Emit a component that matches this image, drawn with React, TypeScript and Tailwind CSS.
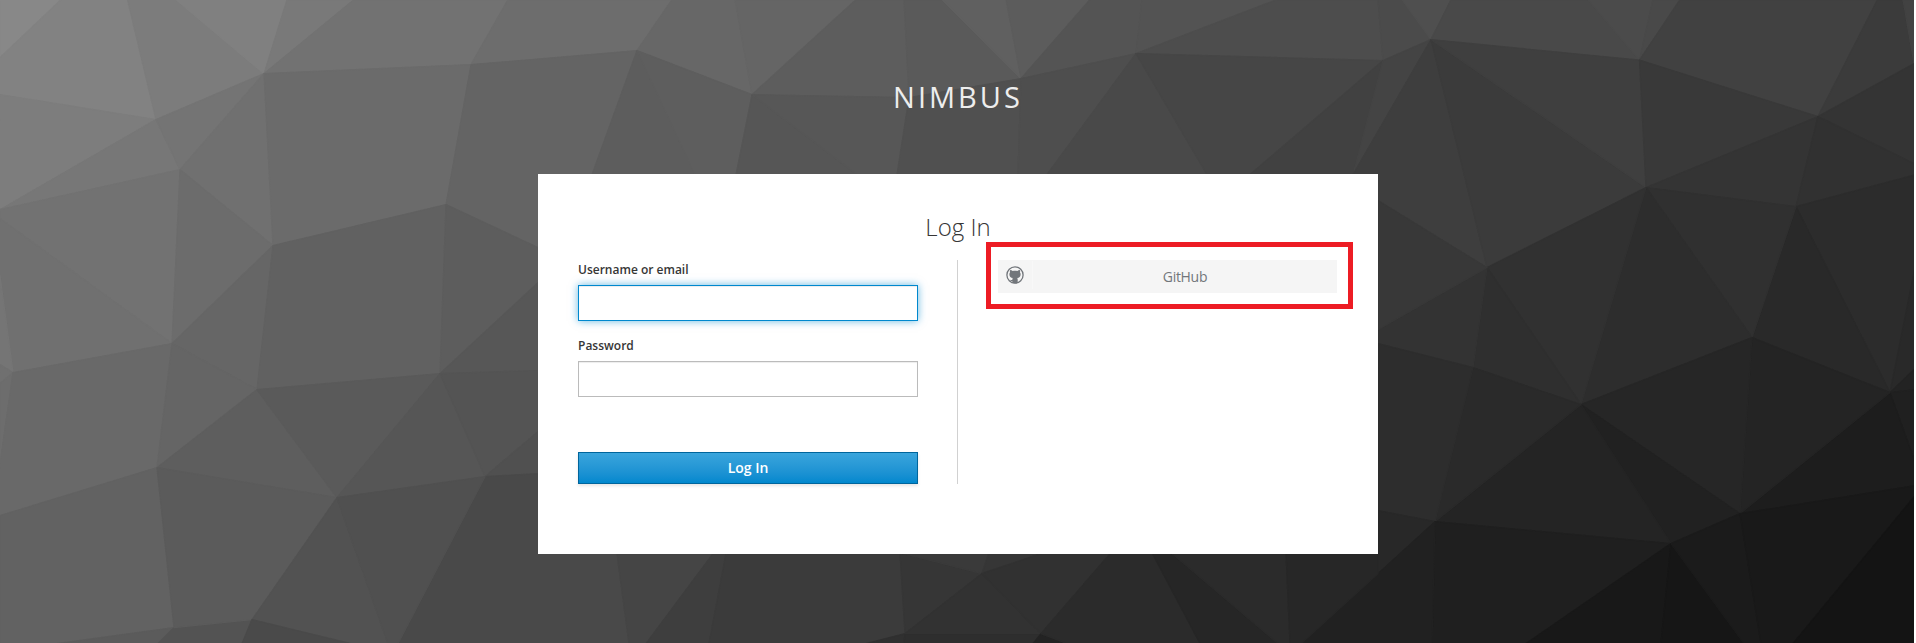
type Facet = [fill: string, points: string];

const facets: Facet[] = [
  ['#888888', '0,-1 61,-1 0,57'],
  ['#828282', '61,-1 127.5,-1 156,119 0,94 0,57'],
  ['#7c7c7c', '127.5,-1 176,-1 264,73 156,119'],
  ['#808080', '176,-1 287,-1 264,73'],
  ['#797979', '287,-1 354,-1 264,73'],
  ['#727272', '354,-1 508,-1 471,64 264,73'],
  ['#6d6d6d', '508,-1 672,-1 637,50 471,64'],
  ['#7d7d7d', '0,94 156,119 0,209'],
  ['#777777', '156,119 180,169 0,209'],
  ['#747474', '156,119 264,73 180,169'],
  ['#707070', '264,73 273,245 180,169'],
  ['#6b6b6b', '264,73 471,64 446,204 273,245'],
  ['#646464', '471,64 637,50 592,174 538,247 446,204'],
  ['#727272', '0,209 180,169 172,343 0,218'],
  ['#707070', '0,218 172,343 13,372 0,275'],
  ['#757575', '0,275 13,372 0,364'],
  ['#707070', '0,364 13,372 0,383'],
  ['#6d6d6d', '0,383 13,372 0,463'],
  ['#6c6c6c', '180,169 273,245 172,343'],
  ['#666666', '273,245 257,389 172,343'],
  ['#616161', '273,245 446,204 440,373 257,389'],
  ['#5d5d5d', '446,204 538,247 538,282 440,373'],
  ['#575757', '440,373 538,282 538,370'],
  ['#696969', '13,372 172,343 157,467 0,515 0,463'],
  ['#656565', '172,343 257,389 157,467'],
  ['#5e5e5e', '257,389 337,497 157,467'],
  ['#5a5a5a', '257,389 440,373 337,497'],
  ['#565656', '440,373 485,476 337,497'],
  ['#545454', '440,373 538,370 538,431 485,476'],
  ['#505050', '485,476 538,431 538,473'],
  ['#494949', '485,476 538,473 617,553 629,643 398,643'],
  ['#626262', '157,467 174,627 57,643 0,643 0,515'],
  ['#5b5b5b', '174,627 57,643 158,643'],
  ['#535353', '174,627 252,619 242,643 158,643'],
  ['#5b5b5b', '157,467 337,497 252,619 174,627'],
  ['#525252', '337,497 388,643 351,643 252,619'],
  ['#505050', '337,497 485,476 398,643 388,643'],
  ['#4a4a4a', '252,619 351,643 242,643'],
  ['#676767', '672,-1 735,-1 752,94 637,50'],
  ['#656565', '735,-1 856,-1 752,94'],
  ['#5d5d5d', '856,-1 904,-1 909,97 752,94'],
  ['#5a5a5a', '904,-1 942,-1 1021,78 909,97'],
  ['#606060', '942,-1 1006,-1 1021,78'],
  ['#5c5c5c', '1006,-1 1090,-1 1021,78'],
  ['#545454', '1090,-1 1142,-1 1136,53 1021,78'],
  ['#535353', '1142,-1 1277,-1 1136,53'],
  ['#4d4d4d', '1277,-1 1378,-1 1383,60 1136,53'],
  ['#4b4b4b', '1378,-1 1402,-1 1431,39 1383,60'],
  ['#4f4f4f', '1402,-1 1451,-1 1431,39'],
  ['#494949', '1451,-1 1588,-1 1639.5,59.5 1431,39'],
  ['#4b4b4b', '1588,-1 1653,-1 1639.5,59.5'],
  ['#494949', '1653,-1 1680,-1 1639.5,59.5'],
  ['#414141', '1680,-1 1877.5,-1 1818,116 1639.5,59.5'],
  ['#3b3b3b', '1877.5,-1 1903,-1 1914,63 1818,116'],
  ['#424242', '1903,-1 1916,-1 1916,62 1914,63'],
  ['#5d5d5d', '637,50 592,174 695,174'],
  ['#5e5e5e', '637,50 752,94 736,174 695,174'],
  ['#565656', '752,94 736,174 857,174'],
  ['#575757', '752,94 909,97 897,174 857,174'],
  ['#505050', '909,97 1021,78 1018,174 897,174'],
  ['#4e4e4e', '1021,78 1136,53 1047,174 1018,174'],
  ['#494949', '1136,53 1047,174 1207,174'],
  ['#464646', '1136,53 1383,60 1250,174 1207,174'],
  ['#414141', '1383,60 1250,174 1353,174'],
  ['#444444', '1383,60 1431,39 1353,174'],
  ['#3e3e3e', '1431,39 1487,267 1378,200 1353,174'],
  ['#3b3b3b', '1431,39 1646,187 1487,267'],
  ['#3f3f3f', '1431,39 1639.5,59.5 1646,187'],
  ['#393939', '1639.5,59.5 1818,116 1646,187'],
  ['#343434', '1818,116 1796,206 1646,187'],
  ['#343434', '1818,116 1916,62 1916,164'],
  ['#313131', '1818,116 1916,164 1916,174 1796,206'],
  ['#2c2c2c', '1796,206 1916,174 1916,262 1890,392'],
  ['#292929', '1796,206 1890,392 1752,337'],
  ['#303030', '1646,187 1796,206 1752,337'],
  ['#2d2d2d', '1646,187 1752,337 1581,404'],
  ['#313131', '1646,187 1581,404 1487,267'],
  ['#2f2f2f', '1487,267 1581,404 1473,367'],
  ['#333333', '1487,267 1473,367 1378,343 1378,329'],
  ['#383838', '1487,267 1378,200 1378,329'],
  ['#292929', '1890,392 1916,262 1916,367'],
  ['#232323', '1890,392 1916,367 1916,389'],
  ['#202020', '1890,392 1916,389 1916,464'],
  ['#1d1d1d', '1890,392 1916,464 1916,485 1740,513'],
  ['#242424', '1752,337 1890,392 1740,513'],
  ['#262626', '1752,337 1740,513 1581,404'],
  ['#212121', '1581,404 1740,513 1671,543'],
  ['#242424', '1581,404 1671,543 1435,521'],
  ['#2a2a2a', '1473,367 1581,404 1435,521'],
  ['#2d2d2d', '1473,367 1435,521 1378,510 1378,343'],
  ['#282828', '1435,521 1378,510 1378,573'],
  ['#1f1f1f', '1435,521 1671,543 1526,643 1432,643'],
  ['#212121', '1435,521 1432,643 1301,643 1378,573'],
  ['#181818', '1671,543 1526,643 1661,643'],
  ['#161616', '1671,543 1661,643 1744,643'],
  ['#1b1b1b', '1671,543 1740,513 1761,643 1744,643'],
  ['#191919', '1740,513 1916,485 1916,494 1793,643 1761,643'],
  ['#141414', '1916,494 1916,643 1793,643'],
  ['#454545', '617,553 713,553 646,643 629,643'],
  ['#3e3e3e', '713,553 726,553 709,643 646,643'],
  ['#3b3b3b', '726,553 900,553 905,633 866,643 709,643'],
  ['#303030', '905,633 866,643 904,643'],
  ['#2e2e2e', '905,633 1041,633 1033,643 904,643'],
  ['#363636', '905,633 982,573 900,552'],
  ['#3a3a3a', '982,573 900,552 989,552'],
  ['#363636', '982,573 989,552 1044,552'],
  ['#323232', '982,573 1041,633 905,633'],
  ['#313131', '982,573 1044,552 1111,552 1041,633'],
  ['#232323', '1041,633 1033,643 1067,643'],
  ['#2b2b2b', '1041,633 1111,552 1152,552 1200,643 1067,643'],
  ['#262626', '1152,552 1171,552 1278,643 1200,643'],
  ['#2b2b2b', '1171,552 1286,552 1290,643 1278,643'],
  ['#272727', '1286,552 1378,552 1378,573 1301,643 1290,643'],
];

function Backdrop() {
  return (
    <svg
      className="absolute inset-y-0 left-0 h-full w-[calc(100%-2px)]"
      viewBox="0 0 1914 643"
      preserveAspectRatio="none"
      aria-hidden="true"
    >
      <defs>
        <linearGradient id="base" x1="0" y1="0" x2="1" y2="0.35">
          <stop offset="0" stopColor="#7c7c7c" />
          <stop offset="0.5" stopColor="#4a4a4a" />
          <stop offset="1" stopColor="#1c1c1c" />
        </linearGradient>
      </defs>
      <rect width="1914" height="643" fill="url(#base)" />
      <g transform="translate(0 0.6)">
        {facets.map(([fill, points]) => (
          <polygon
            key={points}
            points={points}
            fill={fill}
            stroke={fill}
            strokeWidth="1.2"
            strokeLinejoin="round"
          />
        ))}
      </g>
    </svg>
  );
}

function GithubIcon() {
  return (
    <svg className="h-[18px] w-[18px]" viewBox="0 0 18 18" fill="none" aria-hidden="true">
      <circle cx="9" cy="9" r="8.1" stroke="#72767b" strokeWidth="1.3" />
      <path
        fill="#72767b"
        d="M4.2 4c.9 0 1.8.4 2.5 1 1.5-.3 3.100-.3 4.600 0 .7-.6 1.600-1 2.500-1 .4.9.4 1.700.2 2.500.5.6.7 1.300.6 2.100-.1 2.200-1.300 3.200-3.400 3.500.4.5.5 1 .5 1.700v2.900c-1.700.7-3.700.7-5.400 0v-1.700c-1.300.2-1.900-.3-2.300-1.300.9.3 1.400.4 2.300.2 0-.7.1-1.300.5-1.800-2.100-.3-3.300-1.300-3.400-3.500-.1-.8.1-1.500.6-2.100C3.800 5.700 3.800 4.900 4.200 4z"
      />
    </svg>
  );
}

interface FieldProps {
  id: string;
  label: string;
  type: string;
  active?: boolean;
}

function Field({ id, label, type, active = false }: FieldProps) {
  const look = active
    ? 'border-[#0088ce] shadow-[inset_0_1px_1px_rgba(3,3,3,0.075),0_0_8px_rgba(0,136,206,0.6)]'
    : 'border-[#bbbbbb] shadow-[inset_0_1px_1px_rgba(3,3,3,0.075)]';
  return (
    <div className="flex flex-col">
      <label htmlFor={id} className="h-5 text-xs leading-5 font-semibold text-[#363636]">
        {label}
      </label>
      <input
        id={id}
        type={type}
        className={`mt-[5px] h-9 w-full border bg-white px-2 text-sm outline-none ${look}`}
      />
    </div>
  );
}

export default function App() {
  return (
    <div className="relative h-[643px] w-full overflow-hidden bg-white font-['Open_Sans',sans-serif]">
      <Backdrop />
      <div className="relative flex flex-col items-center">
        <header className="flex h-[174px] items-start pt-[77px] text-[29px] leading-10 tracking-[3px] text-[#ededed]">
          NIMBUS
        </header>
        <main className="flex h-[380px] w-[840px] flex-col bg-white px-10">
          <h1 className="mt-9 h-[34px] text-center text-2xl leading-[34px] font-light text-[#363636]">
            Log In
          </h1>
          <div className="mt-4 flex h-[224px]">
            <form className="flex w-[340px] flex-col gap-[15px]">
              <Field id="username" label="Username or email" type="text" active />
              <Field id="password" label="Password" type="password" />
              <button
                type="button"
                className="mt-auto h-8 w-full border border-[#00659c] bg-linear-to-b from-[#39a5dc] to-[#0088ce] text-sm leading-[30px] font-semibold text-white shadow-[0_2px_3px_rgba(3,3,3,0.1)]"
              >
                Log In
              </button>
            </form>
            <div className="ml-[39px] w-px bg-[#d1d1d1]" />
            <div className="-mt-[18px] -mr-[15px] ml-7 h-[67px] w-[367px] shrink-0 border-5 border-[#ed1c24] pt-[13px] pl-[7px]">
              <a href="#github" className="flex h-[33px] w-[339px] items-center bg-[#f5f5f5] text-[#72767b]">
                <span className="-mt-[3px] flex h-7 w-[35px] items-center border-r border-[#f8f8f8] pl-2">
                  <GithubIcon />
                </span>
                <span className="flex-1 text-center text-sm leading-[33px] tracking-[-0.3px]">GitHub</span>
              </a>
            </div>
          </div>
        </main>
      </div>
    </div>
  );
}
